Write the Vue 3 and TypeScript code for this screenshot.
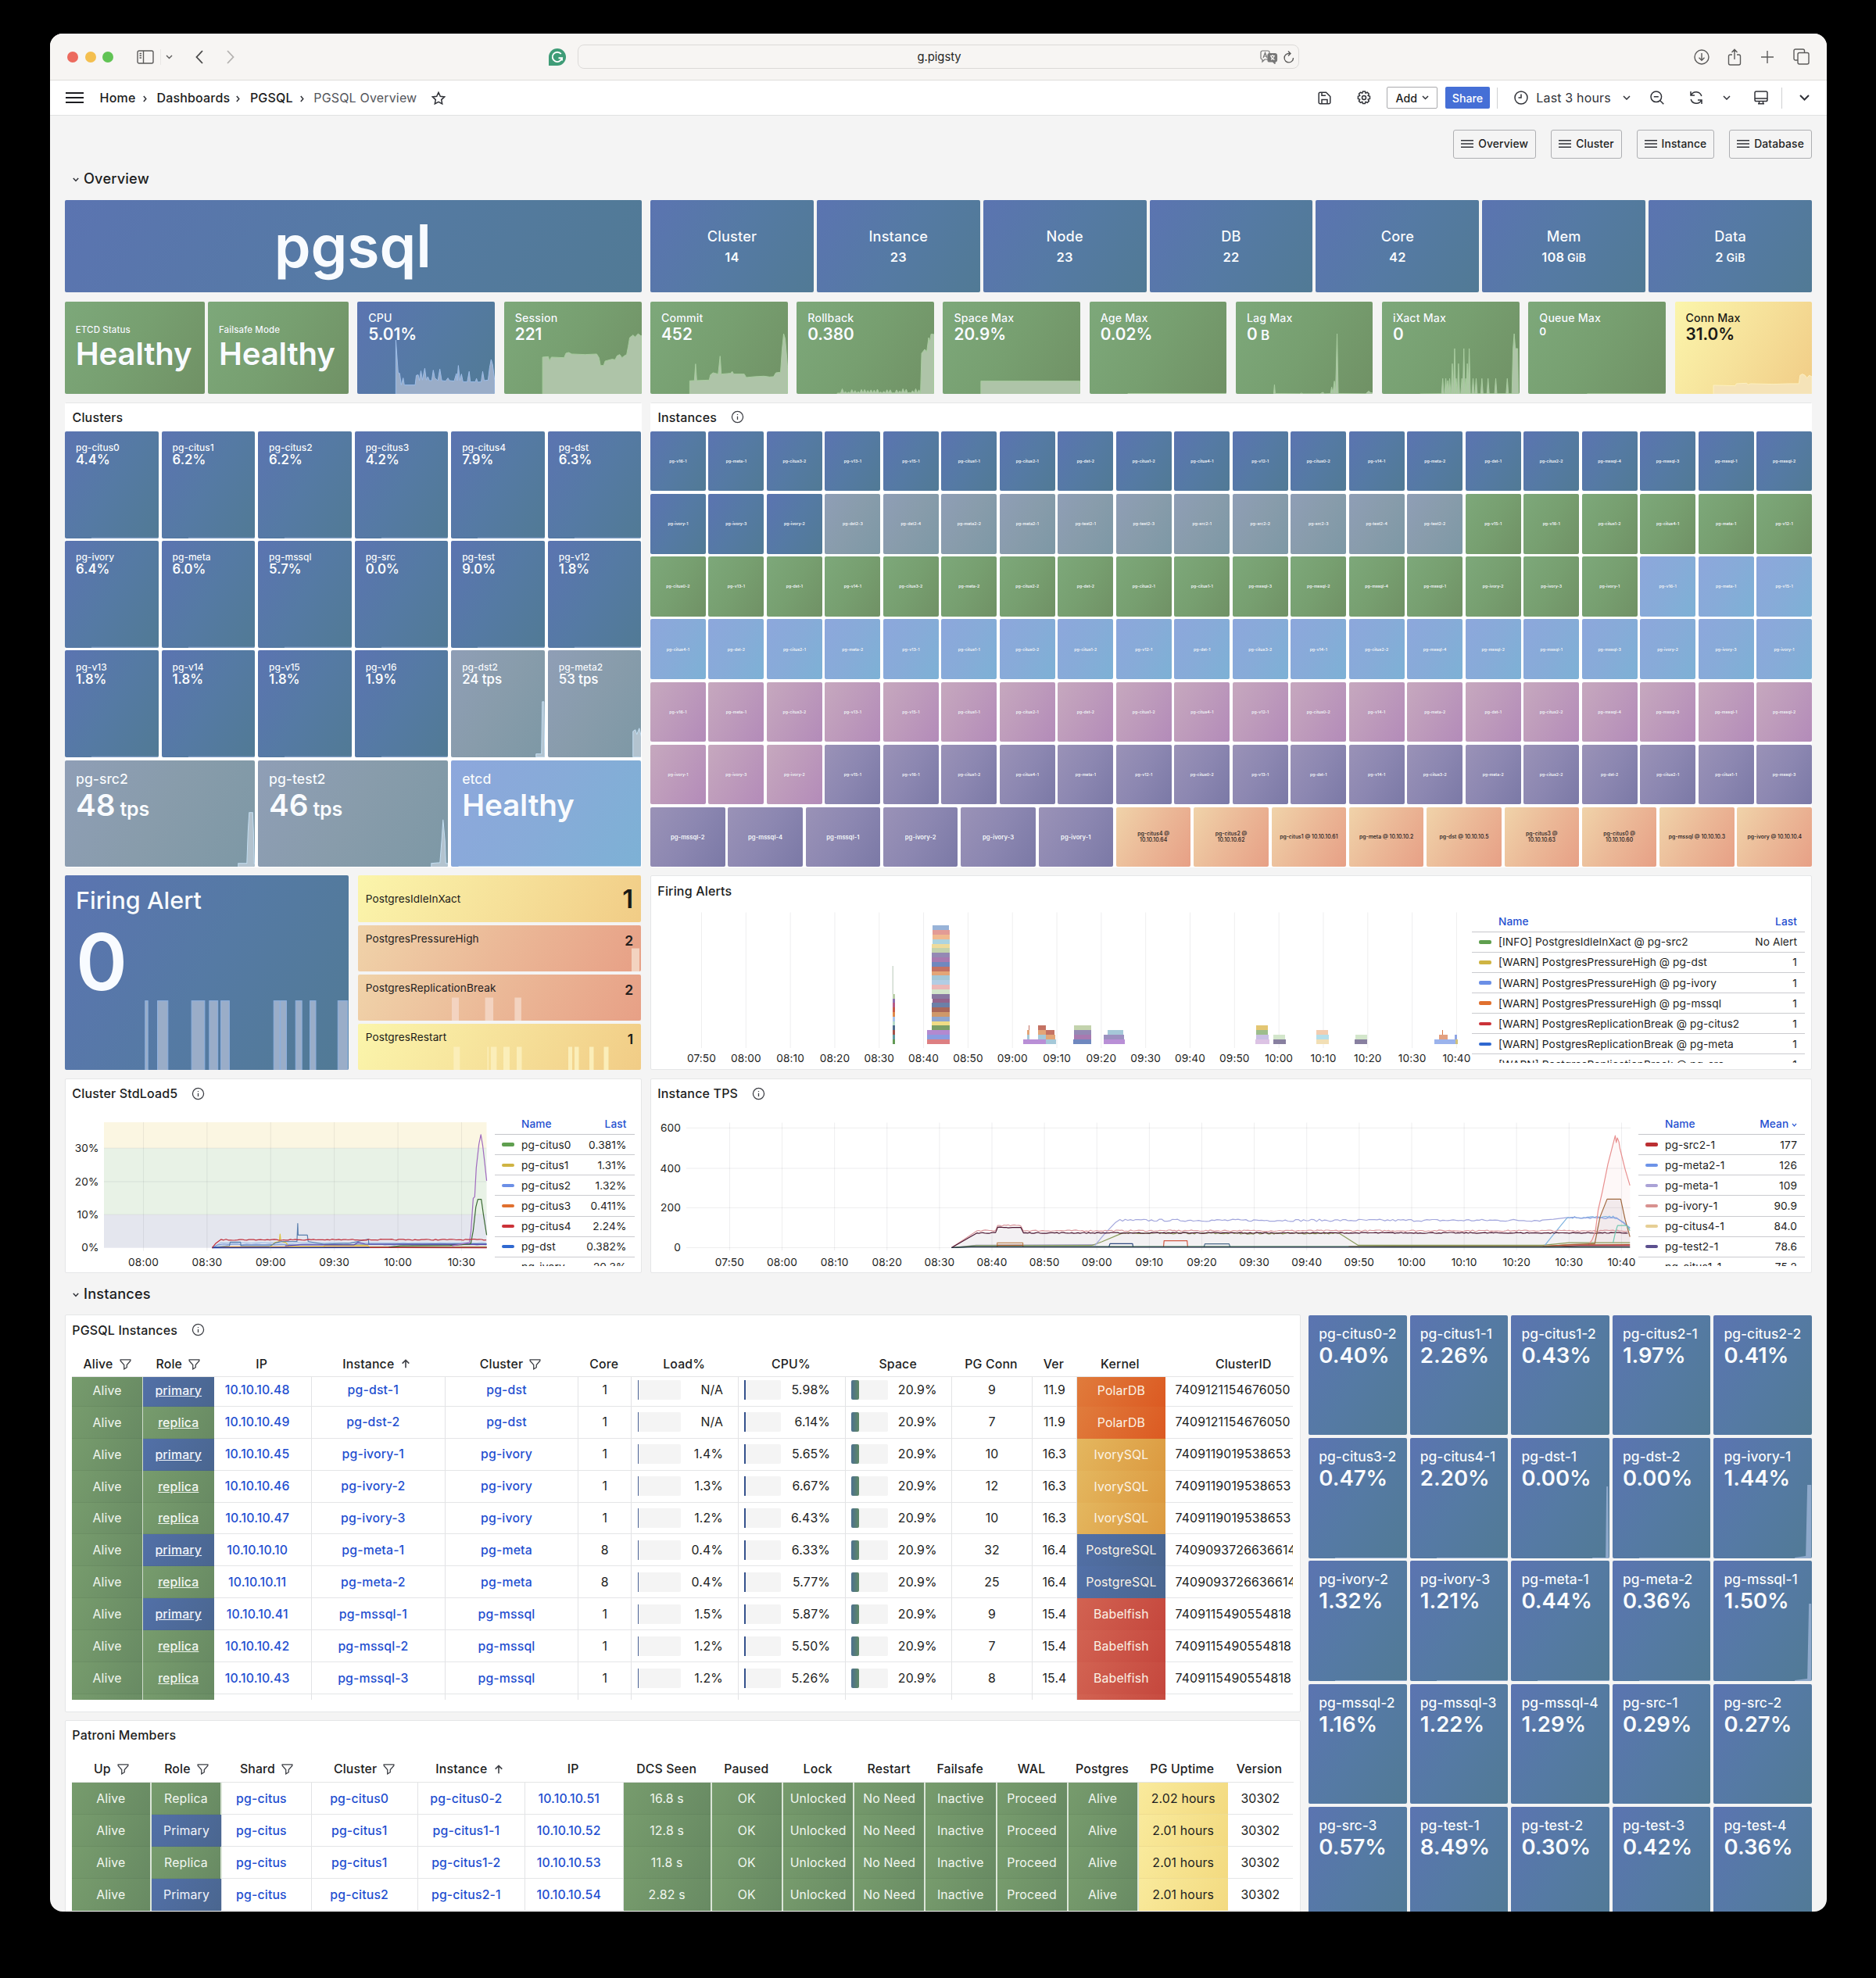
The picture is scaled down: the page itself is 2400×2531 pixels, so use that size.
<script setup lang="ts">
type Tone = 'blue' | 'green' | 'grey' | 'sky' | 'pink' | 'purple' | 'orange' | 'yellow'
interface Stat { title: string; value: string; unit?: string; tone: Tone; small?: boolean; spark?: string; stroke?: string; fill?: string; box?: string }
interface Legend { name: string; value: string; color: string }
interface Col { label: string; w: number; icon?: 'filter' | 'sort' }

const icons: Record<string, string> = {
  filter: 'M3 4h18v2l-6.5 7.5V18l-5 3v-7.500L3 6z',
  sort: 'M12 20V5M5.500 11.500L12 5l6.500 6.500',
  info: 'M12 2a10 10 0 1 0 0 20a10 10 0 1 0 0-20M12 11v6M12 7v1.500',
}

const overview = [
  { t: 'Cluster', v: '14', u: '' }, { t: 'Instance', v: '23', u: '' }, { t: 'Node', v: '23', u: '' },
  { t: 'DB', v: '22', u: '' }, { t: 'Core', v: '42', u: '' }, { t: 'Mem', v: '108', u: ' GiB' }, { t: 'Data', v: '2', u: ' GiB' },
]
const links = [{ n: 'Overview', w: 106.5 }, { n: 'Cluster', w: 90.5 }, { n: 'Instance', w: 99.5 }, { n: 'Database', w: 106 }]

/* Deterministic noise so that the sparklines look the same on each load */
let seed = 7
function rnd(): number {
  seed = (seed * 16807) % 2147483647
  return seed / 2147483647
}
function spikes(list: number[][], base: number, half = 2): string {
  return list.map(([x, y]) => `${x - half},${base} ${x},${y} ${x + half},${base}`).join(' ')
}
const rollNoise = Array.from({ length: 52 }, (_, i) => `${504 + i * 4.1},${i % 2 ? 398 - rnd() * 18 : 398}`).join(' ')

const leftStats: Stat[] = [
  {
    title: 'CPU', value: '5.01%', tone: 'blue', box: '789 47 356 355', fill: '#9aadc8', stroke: '#9dbde8',
    spark: '889,402 889,195 895,320 899,322 903,367 908,340 911,367 939,367 942,330 947,328 950,350 954,313 958,348 964,303 968,348 972,335 976,350 982,350 986,310 990,340 994,345 998,350 1003,306 1008,350 1018,352 1024,340 1028,350 1040,352 1046,323 1048,350 1051,292 1055,350 1059,325 1063,355 1074,355 1079,315 1082,355 1095,355 1098,342 1101,356 1110,355 1114,315 1118,350 1128,348 1132,300 1136,269 1140,290 1145,350 1145,402',
  },
  {
    title: 'Session', value: '221', tone: 'green', box: '1169 47 358 355',
    spark: '1269,402 1269,260 1284,258 1287,275 1292,260 1325,262 1330,245 1337,242 1345,248 1380,250 1410,248 1416,262 1420,292 1428,292 1432,275 1450,268 1458,270 1463,255 1470,250 1476,262 1482,255 1488,250 1492,220 1496,185 1505,175 1510,183 1518,170 1524,177 1527,178 1527,402',
  },
]
const rightStats: Stat[] = [
  {
    title: 'Commit', value: '452', tone: 'green', box: '24 47 352 355',
    spark: '125,402 125,351 137,350 140,286 143,350 175,348 178,328 185,320 198,325 203,256 206,325 230,322 234,315 238,325 265,325 270,338 290,335 315,333 330,336 340,335 346,320 358,318 362,230 366,170 370,190 374,260 376,300 376,402',
  },
  {
    title: 'Rollback', value: '0.380', tone: 'green', box: '399 47 352 355',
    spark: `503,402 ${rollNoise} 717,400 720,245 728,230 733,240 738,185 741,200 744,172 751,172 751,402`,
  },
  { title: 'Space Max', value: '20.9%', tone: 'green', box: '777 47 352 355', spark: '875,402 875,352 1129,352 1129,402' },
  { title: 'Age Max', value: '0.02%', tone: 'green', box: '1152 47 352 355', spark: '1250,402 1250,400 1504,400 1504,402' },
  {
    title: 'Lag Max', value: '0', unit: ' B', tone: 'green', box: '0 47 355 355',
    spark: '98,402 100,366 102,400 165,401 170,398 174,401 218,401 225,395 230,401 245,400 248,375 251,400 255,352 258,398 262,170 265,400 336,401 344,390 348,396 355,398 355,402',
  },
  {
    title: 'iXact Max', value: '0', tone: 'green', box: '381 47 357 355',
    spark: '480,402 ' + spikes([[539, 342], [547, 342], [552, 350], [557, 342], [564, 285], [570, 227], [574, 342], [580, 285], [589, 342], [594, 227], [599, 342], [603, 285], [608, 227], [618, 342], [626, 342], [641, 342], [657, 342], [677, 342], [707, 342]], 401, 3) + ' 719,401 722,227 725,170 728,227 734,227 736,401',
  },
  { title: 'Queue Max', value: '0', tone: 'green', small: true, box: '762 47 356 355', spark: '915,402 915,401 1118,401 1118,402' },
  {
    title: 'Conn Max', value: '31.0%', tone: 'yellow', box: '1143 47 358 355', fill: '#f5e3b8', stroke: '#fdf0bf',
    spark: '1243,402 1243,368 1300,370 1303,362 1330,360 1333,366 1340,362 1400,364 1440,362 1466,362 1469,330 1475,325 1482,330 1487,340 1493,330 1500,335 1500,402',
  },
]

interface ClusterTile { n: string; v: string; tone: Tone; spark?: string }
const base = '34,137 34,136 120,136 120,137'
const cl = (n: string, v: string, tone: Tone = 'blue', spark: string = base): ClusterTile => ({ n, v, tone, spark })
const clusters: ClusterTile[] = [
  cl('pg-citus0', '4.4%'), cl('pg-citus1', '6.2%'), cl('pg-citus2', '6.2%'), cl('pg-citus3', '4.2%'), cl('pg-citus4', '7.9%'), cl('pg-dst', '6.3%'),
  cl('pg-ivory', '6.4%'), cl('pg-meta', '6.0%'), cl('pg-mssql', '5.7%'), cl('pg-src', '0.0%'), cl('pg-test', '9.0%'), cl('pg-v12', '1.8%'),
  cl('pg-v13', '1.8%'), cl('pg-v14', '1.8%'), cl('pg-v15', '1.8%'), cl('pg-v16', '1.9%'),
  cl('pg-dst2', '24 tps', 'grey', '109,137 109,133 116,133 117,66 119,66 120,133 120,137'),
  cl('pg-meta2', '53 tps', 'grey', '109,137 109,104 112,102 114,108 117,100 120,112 120,137'),
]
const bigClusters = [
  { n: 'pg-src2', v: '48', u: ' tps', tone: 'grey', spark: '222,137 222,132 233,132 234.500,91 236,67 240.500,67 241.500,91 242.500,132 243.500,132 243.500,137' },
  { n: 'pg-test2', v: '46', u: ' tps', tone: 'grey', spark: '222,137 222,132 233,131 235.500,100 237,76 239.500,104 240.500,132 243.500,132 243.500,137' },
  { n: 'etcd', v: 'Healthy', u: '', tone: 'sky', spark: '10,137 10,136 243.500,136 243.500,137' },
]

const setA = 'v16-1 meta-1 citus3-2 v13-1 v15-1 citus1-1 citus2-1 dst-2 citus1-2 citus4-1 v12-1 citus0-2 v14-1 meta-2 dst-1 citus2-2 mssql-4 mssql-3 mssql-1 mssql-2 ivory-1 ivory-3 ivory-2'
const setB = 'v15-1 v16-1 citus1-2 citus4-1 meta-1 v12-1 citus0-2 v13-1 dst-1 v14-1 citus3-2 meta-2 citus2-2 dst-2 citus2-1 citus1-1 mssql-3 mssql-2 mssql-4 mssql-1 ivory-2 ivory-3 ivory-1'
const setC = 'v16-1 meta-1 v15-1 citus4-1 dst-2 citus2-1 meta-2 v13-1 citus1-1 citus0-2 citus1-2 v12-1 dst-1 citus3-2 v14-1 citus2-2 mssql-4 mssql-2 mssql-1 mssql-3 ivory-2 ivory-3 ivory-1'
const setG = 'dst2-3 dst2-4 meta2-2 meta2-1 test2-1 test2-3 src2-1 src2-2 src2-3 test2-4 test2-2'
const setP = 'v15-1 v16-1 citus1-2 citus4-1 meta-1 v12-1 citus0-2 v13-1 dst-1 v14-1 citus3-2 meta-2 citus2-2 dst-2 citus2-1 citus1-1 mssql-3'
const paint = (s: string, tone: Tone) => s.split(' ').map((n) => ({ n: 'pg-' + n, tone }))
const instances = [...paint(setA, 'blue'), ...paint(setG, 'grey'), ...paint(setB, 'green'), ...paint(setC, 'sky'), ...paint(setA, 'pink'), ...paint(setP, 'purple')]
const instancesLast = [
  ...paint('mssql-2 mssql-4 mssql-1 ivory-2 ivory-3 ivory-1', 'purple'),
  ...['pg-citus4 @\n10.10.10.64', 'pg-citus2 @\n10.10.10.62', 'pg-citus1 @ 10.10.10.61', 'pg-meta @ 10.10.10.2', 'pg-dst @ 10.10.10.5', 'pg-citus3 @\n10.10.10.63', 'pg-citus0 @\n10.10.10.60', 'pg-mssql @ 10.10.10.3', 'pg-ivory @ 10.10.10.4'].map((n) => ({ n, tone: 'orange' as Tone })),
]

/* Alert summary */
const firingBars = [[102.700, 3.400], [118.400, 13.300], [162, 16.700], [184.700, 10.800], [199.400, 10.800], [267, 7.900], [275.500, 7.700], [295, 7.900], [313.300, 7.400], [349, 12.500]]
const alertRows = [
  { n: 'PostgresIdleInXact', v: '1', tone: 'yellow', big: true, bars: [] as number[][] },
  { n: 'PostgresPressureHigh', v: '2', tone: 'orange', big: false, bars: [[350, 10]] },
  { n: 'PostgresReplicationBreak', v: '2', tone: 'orange', big: false, bars: [[120, 9], [162.600, 10.500], [200.400, 8.500]] },
  { n: 'PostgresRestart', v: '1', tone: 'yellow', big: false, bars: [[122.300, 8], [165.500, 1.500], [170, 7.400], [186, 8], [203, 6.500], [269, 5], [277, 5.500], [296, 5.500], [314.500, 6]] },
]

/* Firing alerts timeline */
const R = (x0: number, x1: number, level: number, color: string, right = false) => {
  const k = right ? 2.01 : 2.063
  const o = right ? 1560 : 820
  return { x: o + x0 / k, w: (x1 - x0) / k, y: 1335.8 - level * 5.83, h: 5.83, color }
}
const tower = ['#dd7f82', '#8b9ce0', '#b389d0', '#7b9f66', '#f0dc85', '#8fa5cf', '#cf9869', '#aa6759', '#6b80a8', '#92648c', '#8878a0', '#d3e6cb', '#ecb8b6', '#b2cde4', '#a5c8d8', '#e3a577', '#c47263', '#6f88bf', '#a87ab0', '#9489b4', '#c3d3ad', '#eedb9b', '#acd4e0', '#f0b98f', '#e39b95', '#98b3d8']
const sliver = ['#629a55', '#5f98a0', '#a3524a', '#4f6a8c', '#b5dbc9', '#a9c3ea', '#e08a4a', '#c95a4a', '#b65a86', '#8f6fb0', '#b9cfa8']
const blocks = [
  ...tower.map((c, i) => R(i < 3 ? 756 : i < 9 ? 767 : 770, i === 25 ? 812 : 815, i + 1, c)),
  ...tower.slice(10, 22).map((c, i) => R(767, 770, i + 11, c)),
  ...sliver.map((c, i) => R(664, 671.500, i + 1, c)),
  R(1008, 1068, 1, '#b98fd6'), R(1068, 1096, 1, '#a5c8d8'), R(1020, 1026, 2, '#a5c8d8'), R(1020, 1026, 3, '#e3a577'), R(1023, 1025, 4, '#c47263'),
  R(1047, 1068, 2, '#a5c8d8'), R(1047, 1068, 3, '#e3a577'), R(1049, 1068, 4, '#c47263'), R(1068, 1093, 2, '#e3a577'), R(1068, 1091, 3, '#c47263'),
  R(1141, 1188, 1, '#6f88bf'), R(1143, 1188, 2, '#a87ab0'), R(1143, 1188, 3, '#9489b4'), R(1143, 1188, 4, '#c3d3ad'),
  R(1221, 1276, 1, '#b98fd6'), R(1221, 1274, 2, '#9c90c0'), R(1232, 1273, 3, '#a5c8d8'),
  R(92, 128, 1, '#dcc3e4', true), R(94, 127, 2, '#c9bfe3', true), R(94, 125, 3, '#9dbd8c', true), R(94, 125, 4, '#e3c673', true),
  R(139, 170, 1, '#8880a0', true), R(139, 169, 2, '#d3e6cb', true),
  R(249, 281, 1, '#f2dfb5', true), R(249, 282, 2, '#b5dfea', true), R(250, 279, 3, '#f2cdb0', true),
  R(348, 379, 1, '#8880a0', true), R(349, 379, 2, '#d3e6cb', true),
  R(552, 607, 1, '#9bb3ec', true), R(564, 587, 2, '#e3a080', true), R(573, 575, 3, '#d97a4a', true), R(606, 611, 2, '#8fa5e3', true), R(607, 614, 1, '#cfc07a', true),
]
const clock = (m: number) => {
  const t = 470 + m
  return String(Math.floor(t / 60)).padStart(2, '0') + ':' + String(t % 60).padStart(2, '0')
}
const alertTicks = Array.from({ length: 18 }, (_, i) => ({ x: 897.5 + i * 56.82, label: clock(i * 10) }))
const tpsTicks = Array.from({ length: 18 }, (_, i) => ({ x: 933.4 + i * 67.12, label: clock(i * 10) }))
const loadTicks = Array.from({ length: 6 }, (_, i) => ({ x: 183.5 + i * 81.4, label: clock(10 + i * 30) }))

const alertLegend: Legend[] = [
  { name: '[INFO] PostgresIdleInXact @ pg-src2', value: 'No Alert', color: '#5f9f4f' },
  { name: '[WARN] PostgresPressureHigh @ pg-dst', value: '1', color: '#cfb443' },
  { name: '[WARN] PostgresPressureHigh @ pg-ivory', value: '1', color: '#6b8fe6' },
  { name: '[WARN] PostgresPressureHigh @ pg-mssql', value: '1', color: '#e0702f' },
  { name: '[WARN] PostgresReplicationBreak @ pg-citus2', value: '1', color: '#cb3238' },
  { name: '[WARN] PostgresReplicationBreak @ pg-meta', value: '1', color: '#2f68d0' },
  { name: '[WARN] PostgresReplicationBreak @ pg-src', value: '1', color: '#fff' },
]
const loadLegend: Legend[] = [
  { name: 'pg-citus0', value: '0.381%', color: '#5f9f4f' }, { name: 'pg-citus1', value: '1.31%', color: '#cfb443' },
  { name: 'pg-citus2', value: '1.32%', color: '#6b8fe6' }, { name: 'pg-citus3', value: '0.411%', color: '#e0702f' },
  { name: 'pg-citus4', value: '2.24%', color: '#cb3238' }, { name: 'pg-dst', value: '0.382%', color: '#2f68d0' },
  { name: 'pg-ivory', value: '20.3%', color: '#fff' },
]
const tpsLegend: Legend[] = [
  { name: 'pg-src2-1', value: '177', color: '#bb2f33' }, { name: 'pg-meta2-1', value: '126', color: '#6d93e8' },
  { name: 'pg-meta-1', value: '109', color: '#aaa2d6' }, { name: 'pg-ivory-1', value: '90.9', color: '#d8918f' },
  { name: 'pg-citus4-1', value: '84.0', color: '#e6cf95' }, { name: 'pg-test2-1', value: '78.6', color: '#5b4f8e' },
  { name: 'pg-citus1-1', value: '75.2', color: '#fff' },
]

/* Cluster load series, in plot space */
const lp = (pts: number[][]) => pts.map(([x, y]) => `${(70 + x / 2.036).toFixed(1)},${(960 + y / 2.306).toFixed(1)}`).join(' ')
function flat(x0: number, x1: number, y: number, amp: number, step: number): number[][] {
  const out: number[][] = []
  for (let x = x0; x <= x1; x += step) out.push([x, y + (rnd() - 0.5) * amp])
  return out
}
const loadSeries = [
  { c: '#a9c4e8', p: lp([[410, 1466], [432, 1451], ...flat(440, 1125, 1451, 2, 12)]) },
  { c: '#7f9bd6', p: lp([[410, 1466], [425, 1457], ...flat(440, 1125, 1456, 2, 12)]) },
  { c: '#c98a3f', p: lp([[410, 1466], [440, 1463], [1125, 1463]]) },
  { c: '#e0c23f', p: lp([[558, 1466], [574, 1450], [585, 1447], [587, 1425], [589, 1447], [602, 1450], [610, 1462], [700, 1462], [704, 1459], [815, 1458], [820, 1464], [1125, 1464]]) },
  { c: '#5a7fae', p: lp([[410, 1464], [455, 1460], [457, 1449], [484, 1449], [485, 1460], [562, 1460], [574, 1452], [590, 1447], [631, 1447], [633, 1394], [634, 1428], [658, 1428], [660, 1447], [700, 1455], [770, 1452], [790, 1447], [817, 1440], [818, 1455], [1125, 1454]]) },
  { c: '#5a4ab0', p: lp([[600, 1460], [640, 1457], [780, 1457], [790, 1450], [810, 1455], [1125, 1456]]) },
  { c: '#1c2f9a', p: lp([[410, 1466], [1125, 1465]]) },
  { c: '#3d6b35', p: lp([[870, 1464], [900, 1460], [1030, 1459], [1080, 1455], [1084, 1452], [1090, 1415], [1097, 1345], [1102, 1323], [1111, 1323], [1117, 1370], [1125, 1428]]) },
  { c: '#a06bbf', p: lp([[1035, 1460], [1080, 1450], [1084, 1420], [1090, 1320], [1094, 1315], [1098, 1230], [1105, 1160], [1110, 1132], [1115, 1165], [1120, 1215], [1125, 1268]]) },
  { c: '#c0303c', p: lp([[410, 1466], [420, 1452], [433, 1441], ...flat(440, 1125, 1442, 3, 6)]) },
  { c: '#a8203a', p: lp([[820, 1465], [1125, 1466]]) },
]

/* TPS series: minutes after 07:50 against transactions per second */
const tp = (pts: number[][]) => pts.map(([m, v]) => `${(933.4 + m * 6.712).toFixed(1)},${(1595.5 - v * 0.2555).toFixed(1)}`).join(' ')
const backbone = (v: number, b: number, amp: number) => [[42.300, 0], [47.200, v], ...flat(47.500, 50.900, v, amp, 0.4), ...flat(51.100, 55.800, b, amp, 0.4), ...flat(56, 171.600, v, amp, 0.4)]
const tpsFill = tp([[42.300, 0], [47.200, 75], [51, 75], [51, 104], [55.900, 104], [55.900, 75], [164.900, 76], [166, 153], [167.250, 243], [169.850, 243], [170.700, 140], [171.600, 75], [171.600, 0]])
const pinkPts = [[163.700, 15], [164.400, 40], [165, 80], [165.550, 190], [166.300, 275], [167, 365], [167.400, 418], [168.100, 490], [168.800, 561], [169, 527], [169.200, 550], [169.500, 530], [169.700, 497], [170.700, 392], [171.600, 312]]
const tpsSeries = [
  { c: '#8f88b5', p: tp([[42.300, 0], [47, 12], [69.500, 14]]) },
  { c: '#8a9a5a', p: tp([[42.300, 0], [47, 10], [69, 11], [71, 30], [74.400, 68], ...flat(75, 115.900, 72, 8, 0.4), [116, 75], [119.800, 12], [155, 12], [160, 25], [171.600, 25]]) },
  { c: '#a3a7dd', p: tp([[69.600, 10], [71.500, 70], [73.500, 125], ...flat(74.400, 155, 137, 11, 0.5), [157, 142], [160, 152]]) },
  { c: '#7fb3e0', p: tp([[155.400, 12], [157, 65], [159.600, 148], ...flat(160, 169.400, 152, 12, 0.35), [170.500, 125], [171.600, 95]]) },
  { c: '#8fa0e0', p: tp([...flat(160, 169.400, 149, 8, 0.5), [171.600, 100]]) },
  { c: '#d9969b', p: tp(backbone(85, 111, 7)) },
  { c: '#4a1530', p: tp(backbone(74, 101, 5)) },
  { c: '#e88f8f', p: tp(pinkPts) },
  { c: '#a0683f', p: tp([[155, 5], [160, 15], [164.900, 20], [165.900, 153], [167.250, 243], [169.850, 243], [170.700, 140], [171.600, 54]]) },
  { c: '#6fc7b0', p: tp([[168.400, 25], [168.800, 74], [169.250, 111], [171, 111], [171.600, 85]]) },
  { c: '#c08a5a', p: tp([[51, 4], [51, 24], [55.900, 24], [55.900, 4]]) },
  { c: '#a85a2a', p: tp([[51, 4], [51, 12], [55.900, 12], [55.900, 4]]) },
  { c: '#2f4a80', p: tp([[72.300, 4], [72.500, 20], [76.800, 20], [76.900, 4]]) },
  { c: '#d05a45', p: tp([[82.700, 4], [82.800, 35], [87.200, 35], [87.300, 4]]) },
  { c: '#4a6a8a', p: tp([[90.400, 4], [90.600, 19], [95.200, 19], [95.400, 4]]) },
  { c: '#b8542a', p: tp([[118, 6], [155, 8], [160, 14], [171.600, 15]]) },
  { c: '#a02040', p: tp([[156, 4], [162, 10], [171.600, 10]]) },
  { c: '#2f6b45', p: tp([[42.300, 0], [46, 5], [120, 6], [171.600, 4]]) },
  { c: '#26314a', p: tp([[42.300, 0], [46, 3], [171.600, 2]]) },
]

/* PGSQL instances table */
const cols1: Col[] = [
  { label: 'Alive', w: 91, icon: 'filter' }, { label: 'Role', w: 90.500, icon: 'filter' }, { label: 'IP', w: 125.400 }, { label: 'Instance', w: 170.900, icon: 'sort' },
  { label: 'Cluster', w: 170.400, icon: 'filter' }, { label: 'Core', w: 68.300 }, { label: 'Load%', w: 136.400 }, { label: 'CPU%', w: 137 }, { label: 'Space', w: 136.600 },
  { label: 'PG Conn', w: 102.200 }, { label: 'Ver', w: 57.700 }, { label: 'Kernel', w: 112.200 }, { label: 'ClusterID', w: 163.500 },
]
const grid1 = cols1.map((c) => c.w + 'px').join(' ')
const rows1 = [
  ['primary', '10.10.10.48', 'pg-dst-1', 'pg-dst', '1', 'N/A', '5.98%', '9', '11.9', 'PolarDB', '7409121154676050'],
  ['replica', '10.10.10.49', 'pg-dst-2', 'pg-dst', '1', 'N/A', '6.14%', '7', '11.9', 'PolarDB', '7409121154676050'],
  ['primary', '10.10.10.45', 'pg-ivory-1', 'pg-ivory', '1', '1.4%', '5.65%', '10', '16.3', 'IvorySQL', '7409119019538653'],
  ['replica', '10.10.10.46', 'pg-ivory-2', 'pg-ivory', '1', '1.3%', '6.67%', '12', '16.3', 'IvorySQL', '7409119019538653'],
  ['replica', '10.10.10.47', 'pg-ivory-3', 'pg-ivory', '1', '1.2%', '6.43%', '10', '16.3', 'IvorySQL', '7409119019538653'],
  ['primary', '10.10.10.10', 'pg-meta-1', 'pg-meta', '8', '0.4%', '6.33%', '32', '16.4', 'PostgreSQL', '7409093726636614'],
  ['replica', '10.10.10.11', 'pg-meta-2', 'pg-meta', '8', '0.4%', '5.77%', '25', '16.4', 'PostgreSQL', '7409093726636614'],
  ['primary', '10.10.10.41', 'pg-mssql-1', 'pg-mssql', '1', '1.5%', '5.87%', '9', '15.4', 'Babelfish', '7409115490554818'],
  ['replica', '10.10.10.42', 'pg-mssql-2', 'pg-mssql', '1', '1.2%', '5.50%', '7', '15.4', 'Babelfish', '7409115490554818'],
  ['replica', '10.10.10.43', 'pg-mssql-3', 'pg-mssql', '1', '1.2%', '5.26%', '8', '15.4', 'Babelfish', '7409115490554818'],
  ['replica', '', '', '', '', '', '', '', '', 'Babelfish', ''],
]

/* Patroni table */
const cols2: Col[] = [
  { label: 'Up', w: 101.600, icon: 'filter' }, { label: 'Role', w: 90.700, icon: 'filter' }, { label: 'Shard', w: 114.300, icon: 'filter' }, { label: 'Cluster', w: 136.200, icon: 'filter' },
  { label: 'Instance', w: 137.200, icon: 'sort' }, { label: 'IP', w: 125.600 }, { label: 'DCS Seen', w: 113.200 }, { label: 'Paused', w: 91.100 }, { label: 'Lock', w: 91.600 },
  { label: 'Restart', w: 90.500 }, { label: 'Failsafe', w: 91.600 }, { label: 'WAL', w: 91 }, { label: 'Postgres', w: 90 }, { label: 'PG Uptime', w: 114.400 }, { label: 'Version', w: 83 },
]
const grid2 = cols2.map((c) => c.w + 'px').join(' ')
const rows2 = [
  ['Replica', 'pg-citus0', 'pg-citus0-2', '10.10.10.51', '16.8 s', '2.02 hours'],
  ['Primary', 'pg-citus1', 'pg-citus1-1', '10.10.10.52', '12.8 s', '2.01 hours'],
  ['Replica', 'pg-citus1', 'pg-citus1-2', '10.10.10.53', '11.8 s', '2.01 hours'],
  ['Primary', 'pg-citus2', 'pg-citus2-1', '10.10.10.54', '2.82 s', '2.01 hours'],
]
const states = ['OK', 'Unlocked', 'No Need', 'Inactive', 'Proceed', 'Alive']

const side = [
  ['pg-citus0-2', '0.40%'], ['pg-citus1-1', '2.26%'], ['pg-citus1-2', '0.43%'], ['pg-citus2-1', '1.97%'], ['pg-citus2-2', '0.41%'],
  ['pg-citus3-2', '0.47%'], ['pg-citus4-1', '2.20%'], ['pg-dst-1', '0.00%'], ['pg-dst-2', '0.00%'], ['pg-ivory-1', '1.44%'],
  ['pg-ivory-2', '1.32%'], ['pg-ivory-3', '1.21%'], ['pg-meta-1', '0.44%'], ['pg-meta-2', '0.36%'], ['pg-mssql-1', '1.50%'],
  ['pg-mssql-2', '1.16%'], ['pg-mssql-3', '1.22%'], ['pg-mssql-4', '1.29%'], ['pg-src-1', '0.29%'], ['pg-src-2', '0.27%'],
  ['pg-src-3', '0.57%'], ['pg-test-1', '8.49%'], ['pg-test-2', '0.30%'], ['pg-test-3', '0.42%'], ['pg-test-4', '0.36%'],
]
const sideSpark = (i: number): string => {
  if (i === 7) return '104,154 104,153 121,153 122,62 124,62 125,153 125,154'
  if (i === 9) return '104,154 104,153 118,151 120,60 125,60 125,154'
  if (i === 14) return '104,154 104,153 120,151 122,55 125,55 125,154'
  return '34,154 34,153 126,153 126,154'
}
</script>

<template>
  <div class="desk">
    <div class="window">
      <header class="chrome">
        <div class="lights"><i class="r" /><i class="y" /><i class="g" /></div>
        <svg class="cs-side" width="22" height="18" viewBox="0 0 22 18"><rect x="1" y="1" width="20" height="16" rx="2" /><path d="M8.500 1v16M3.500 4.500h2.500M3.500 7.300h2.500M3.500 10h2.500" /></svg>
        <span class="cs-sep" />
        <svg class="cs-drop" width="9" height="6" viewBox="0 0 9 6"><path d="M1 1l3.500 3.500L8 1" /></svg>
        <svg class="cs-back" width="10" height="18" viewBox="0 0 10 18"><path d="M9 1L1.500 9L9 17" /></svg>
        <svg class="cs-fwd" width="10" height="18" viewBox="0 0 10 18"><path d="M1 1l7.500 8L1 17" /></svg>
        <svg class="cs-gram" width="22" height="22" viewBox="0 0 22 22"><path d="M11 0a11 11 0 1 1 0 22H0V11A11 11 0 0 1 11 0z" fill="#3f9c77" /><path d="M15.800 7A6.200 6.200 0 1 0 17 12.300h-4.500M17 12v3.500" fill="none" stroke="#fff" stroke-width="1.900" /></svg>
        <div class="url">
          <span>g.pigsty</span>
          <svg class="u-tr" width="23" height="18" viewBox="0 0 23 18"><path d="M3 1h7a2 2 0 0 1 2 2v7a2 2 0 0 1-2 2H6l-3 3v-3a2 2 0 0 1-2-2V3a2 2 0 0 1 2-2zM4 10l2.500-6.500L9 10M5 8h3" /><path d="M12 4.500h7a2.500 2.500 0 0 1 2.500 2.500v5.500A2.500 2.500 0 0 1 19 15v2.500L16.500 15H12a2 2 0 0 1-2-2V6.500a2 2 0 0 1 2-2z" fill="#777" /><path d="M13 7.500h6M16 6v1.500M14 12.500c2.500-1 3.500-2.500 4-5M14 8c.5 2 2 3.500 4.500 4.500" stroke="#f7f5f3" /></svg>
          <svg class="u-re" width="14" height="17" viewBox="0 0 14 17"><path d="M12.500 10A5.700 5.700 0 1 1 7 4.500h1.500M6 1.500l3 3l-3 3" /></svg>
        </div>
        <div class="cs-right">
          <svg width="20" height="20" viewBox="0 0 20 20"><circle cx="10" cy="10" r="9" /><path d="M10 5v9M6.500 10.800L10 14.200l3.500-3.400" /></svg>
          <svg width="18" height="22" viewBox="0 0 18 22"><path d="M6 8H3.500A2 2 0 0 0 1.500 10v9a2 2 0 0 0 2 2h11a2 2 0 0 0 2-2v-9a2 2 0 0 0-2-2H12M9 14V1.500M5.500 5L9 1.300L12.500 5" /></svg>
          <svg width="16" height="16" viewBox="0 0 16 16"><path d="M8 0v16M0 8h16" /></svg>
          <svg width="21" height="21" viewBox="0 0 21 21"><rect x="6" y="5.500" width="14" height="14.500" rx="2" /><path d="M6 15H3a2 2 0 0 1-2-2V3a2 2 0 0 1 2-2h9.500a2 2 0 0 1 2 2v2.500" /></svg>
        </div>
      </header>

      <nav class="nav">
        <svg class="n-menu" width="23" height="14" viewBox="0 0 23 14"><path d="M0 1h23M0 7h23M0 13h23" /></svg>
        <span class="crumb c1">Home</span><svg class="sep" width="5" height="9" viewBox="0 0 5 9"><path d="M.8 1l3 3.500l-3 3.500" /></svg>
        <span class="crumb c2">Dashboards</span><svg class="sep" width="5" height="9" viewBox="0 0 5 9"><path d="M.8 1l3 3.500l-3 3.500" /></svg>
        <span class="crumb c3">PGSQL</span><svg class="sep" width="5" height="9" viewBox="0 0 5 9"><path d="M.8 1l3 3.500l-3 3.500" /></svg>
        <span class="crumb c4">PGSQL Overview</span>
        <svg class="n-star" width="18" height="17" viewBox="0 0 18 17"><path d="M9 1.200l2.300 5l5.400.7l-4 3.700l1 5.300L9 13.300L4.300 15.900l1-5.300l-4-3.700l5.400-.7z" /></svg>
        <div class="tools">
          <svg class="t-save" width="17" height="17" viewBox="0 0 17 17"><path d="M1.200 3A1.800 1.800 0 0 1 3 1.200h7.500l5.300 5.300V14a1.800 1.800 0 0 1-1.800 1.800H3A1.800 1.800 0 0 1 1.200 14zM5 1.200v4h5M5 15.500V10.500h7v5" /></svg>
          <svg class="t-gear" width="18" height="18" viewBox="0 0 18 18"><circle cx="9" cy="9" r="2.500" /><path d="M7.500 1h3l.6 2.200l2.200-1.100l2 2l-1.100 2.200l2.300.9v3.200l-2.300.8l1.100 2.200l-2 2l-2.200-1.100l-.8 2.300H7.500l-.8-2.300l-2.200 1.100l-2-2l1.100-2.200L1.400 10.500V7.300l2.200-.9l-1.100-2.200l2-2l2.200 1.100z" /></svg>
          <button class="add">Add <svg width="9" height="6" viewBox="0 0 9 6"><path d="M1 1l3.500 3.500L8 1" /></svg></button>
          <button class="share">Share</button>
          <span class="vbar v1" />
          <svg class="t-clock" width="18" height="18" viewBox="0 0 18 18"><circle cx="9" cy="9" r="8" /><path d="M9 4.500V9H5.500" /></svg>
          <span class="range">Last 3 hours</span>
          <svg class="t-d1" width="10" height="6" viewBox="0 0 10 6"><path d="M1 1l4 4l4-4" /></svg>
          <svg class="t-zoom" width="18" height="18" viewBox="0 0 18 18"><circle cx="7.800" cy="7.800" r="6.800" /><path d="M4.800 7.800h6M12.800 12.800l4.500 4.500" /></svg>
          <svg class="t-ref" width="18" height="18" viewBox="0 0 18 18"><path d="M2 1v5h5M2.300 6A7.200 7.200 0 0 1 15.800 7M16 17v-5h-5M15.700 12A7.200 7.200 0 0 1 2.200 11" /></svg>
          <svg class="t-d2" width="10" height="6" viewBox="0 0 10 6"><path d="M1 1l4 4l4-4" /></svg>
          <svg class="t-mon" width="18" height="18" viewBox="0 0 18 18"><rect x="1" y="1" width="16" height="12.500" rx="1.800" /><path d="M1 10h16M6.500 13.500v3M11.500 13.500v3M5 16.800h8" /></svg>
          <span class="vbar v2" />
          <svg class="t-d3" width="13" height="8" viewBox="0 0 13 8"><path d="M1 1l5.500 5.500L12 1" /></svg>
        </div>
      </nav>

      <main class="body">
        <div class="links">
          <a v-for="l in links" :key="l.n" :style="{ width: l.w + 'px' }"><svg width="16" height="10" viewBox="0 0 16 10"><path d="M0 .8h16M0 5h16M0 9.200h16" /></svg>{{ l.n }}</a>
        </div>
        <div class="rowtitle"><svg width="8" height="6" viewBox="0 0 8 6"><path d="M.8 1L4 4.500L7.200 1" /></svg>Overview</div>

        <section class="line h1">
          <div class="left tile blue hero">pgsql</div>
          <div class="right tight">
            <div v-for="o in overview" :key="o.t" class="tile blue ov"><span class="ot">{{ o.t }}</span><span class="ovv">{{ o.v }}<small>{{ o.u }}</small></span></div>
          </div>
        </section>

        <section class="line h2">
          <div class="left panels">
            <div class="double tight">
              <div class="tile green health"><span>ETCD Status</span><b>Healthy</b></div>
              <div class="tile green health"><span>Failsafe Mode</span><b>Healthy</b></div>
            </div>
            <div v-for="s in leftStats" :key="s.title" class="tile stat" :class="s.tone">
              <svg class="spark" :viewBox="s.box" preserveAspectRatio="none"><polygon :points="s.spark" :fill="s.fill || '#aec4a8'" :stroke="s.stroke || '#a8cc9f'" /></svg>
              <span class="st">{{ s.title }}</span><b>{{ s.value }}</b>
            </div>
          </div>
          <div class="right panels">
            <div v-for="s in rightStats" :key="s.title" class="tile stat" :class="[s.tone, { small: s.small }]">
              <svg class="spark" :viewBox="s.box" preserveAspectRatio="none"><polygon :points="s.spark" :fill="s.fill || '#aec4a8'" :stroke="s.stroke || '#a8cc9f'" /></svg>
              <span class="st">{{ s.title }}</span><b>{{ s.value }}<small>{{ s.unit }}</small></b>
            </div>
          </div>
        </section>

        <section class="line h3">
          <div class="left panel">
            <h2>Clusters</h2>
            <div class="cgrid">
              <div v-for="c in clusters" :key="c.n" class="tile ctile" :class="c.tone">
                <svg class="spark" viewBox="0 0 120 137" preserveAspectRatio="none"><polygon :points="c.spark" :fill="c.tone === 'grey' ? '#b3c3cf' : '#8aa6cc'" :stroke="c.tone === 'grey' ? '#c3def2' : 'none'" /></svg>
                <span>{{ c.n }}</span><b>{{ c.v }}</b>
              </div>
            </div>
            <div class="bigc">
              <div v-for="c in bigClusters" :key="c.n" class="tile btile" :class="c.tone">
                <svg class="spark" viewBox="0 0 243.500 137" preserveAspectRatio="none"><polygon :points="c.spark" fill="#b3c3cf" stroke="#c3def2" /></svg>
                <span>{{ c.n }}</span><b>{{ c.v }}<small>{{ c.u }}</small></b>
              </div>
            </div>
          </div>
          <div class="right panel">
            <h2>Instances <svg class="info" viewBox="0 0 24 24"><path :d="icons.info" /></svg></h2>
            <div class="igrid"><div v-for="(t, i) in instances" :key="i" class="tile it" :class="t.tone">{{ t.n }}</div></div>
            <div class="ilast"><div v-for="(t, i) in instancesLast" :key="i" class="tile il" :class="t.tone"><span>{{ t.n }}</span></div></div>
          </div>
        </section>

        <section class="line h4">
          <div class="left panels">
            <div class="tile blue fire">
              <svg class="spark" viewBox="0 0 362.700 248.400" preserveAspectRatio="none"><rect v-for="(b, i) in firingBars" :key="i" :x="b[0]" y="160.500" :width="b[1]" height="90" fill="#9aadc8" stroke="#8fb2e0" stroke-width="1" /></svg>
              <span>Firing Alert</span><b>0</b>
            </div>
            <div class="arows">
              <div v-for="a in alertRows" :key="a.n" class="tile arow" :class="[a.tone, { big: a.big }]">
                <svg class="spark" viewBox="0 0 362.700 59.400" preserveAspectRatio="none"><rect v-for="(b, i) in a.bars" :key="i" :x="b[0]" y="29.500" :width="b[1]" height="30" :fill="a.tone === 'orange' ? '#f3d3c0' : '#fbeeb9'" /></svg>
                <span>{{ a.n }}</span><b>{{ a.v }}</b>
              </div>
            </div>
          </div>
          <div class="right panel">
            <h2>Firing Alerts</h2>
            <div class="chartrow">
              <svg class="chart" width="1050" height="208" viewBox="833 1158 1050 208">
                <line v-for="t in alertTicks" :key="t.label" :x1="t.x" :x2="t.x" y1="1167.500" y2="1341" class="gl" />
                <rect v-for="(b, i) in blocks" :key="i" :x="b.x" :y="b.y" :width="b.w" :height="b.h" :fill="b.color" shape-rendering="crispEdges" />
                <path d="M1142.200 1236V1272" stroke="#b9c8b9" stroke-width="1" />
                <text v-for="t in alertTicks" :key="'t' + t.label" :x="t.x" y="1359" text-anchor="middle">{{ t.label }}</text>
              </svg>
              <div class="legend" style="width: 426px">
                <div class="lh"><span>Name</span><span>Last</span></div>
                <div v-for="l in alertLegend" :key="l.name" class="lr"><i :style="{ background: l.color }" /><span>{{ l.name }}</span><em>{{ l.value }}</em></div>
              </div>
            </div>
          </div>
        </section>

        <section class="line h5">
          <div class="left panel">
            <h2>Cluster StdLoad5 <svg class="info" viewBox="0 0 24 24"><path :d="icons.info" /></svg></h2>
            <div class="chartrow">
              <svg class="chart" width="549" height="208" viewBox="84 1417 549 208">
                <rect x="133" y="1435" width="489.500" height="33.200" fill="#fbf6e2" />
                <rect x="133" y="1468.200" width="489.500" height="85" fill="#e8f2e6" />
                <rect x="133" y="1553.200" width="489.500" height="42.500" fill="#e4e6ee" />
                <line v-for="t in loadTicks" :key="t.label" :x1="t.x" :x2="t.x" y1="1435" y2="1599.500" class="gl" />
                <line v-for="y in [1468.2, 1511, 1553.2]" :key="y" x1="133" x2="622.500" :y1="y" :y2="y" class="gl" />
                <polyline v-for="(s, i) in loadSeries" :key="i" :points="s.p" :stroke="s.c" class="ser" />
                <text v-for="t in loadTicks" :key="'t' + t.label" :x="t.x" y="1619" text-anchor="middle">{{ t.label }}</text>
                <text x="126.500" y="1473" text-anchor="end">30%</text><text x="126.500" y="1516" text-anchor="end">20%</text>
                <text x="126.500" y="1558" text-anchor="end">10%</text><text x="126.500" y="1600" text-anchor="end">0%</text>
              </svg>
              <div class="legend" style="width: 178.5px">
                <div class="lh"><span>Name</span><span>Last</span></div>
                <div v-for="l in loadLegend" :key="l.name" class="lr"><i :style="{ background: l.color }" /><span>{{ l.name }}</span><em>{{ l.value }}</em></div>
              </div>
            </div>
          </div>
          <div class="right panel">
            <h2>Instance TPS <svg class="info" viewBox="0 0 24 24"><path :d="icons.info" /></svg></h2>
            <div class="chartrow">
              <svg class="chart" width="1263" height="208" viewBox="833 1417 1263 208">
                <line v-for="t in tpsTicks" :key="t.label" :x1="t.x" :x2="t.x" y1="1435.500" y2="1599" class="gl" />
                <line v-for="y in [1442.3, 1494, 1544.4, 1595.5]" :key="y" x1="878" x2="2086" :y1="y" :y2="y" class="gl" />
                <polygon :points="tpsFill" fill="#5a3a5a" fill-opacity=".07" />
                <polygon :points="tp([...pinkPts, [171.6, 0], [163.7, 0]])" fill="#e88f8f" fill-opacity=".06" />
                <polyline v-for="(s, i) in tpsSeries" :key="i" :points="s.p" :stroke="s.c" class="ser" />
                <text v-for="t in tpsTicks" :key="'t' + t.label" :x="t.x" y="1619" text-anchor="middle">{{ t.label }}</text>
                <text x="871" y="1447" text-anchor="end">600</text><text x="871" y="1498.500" text-anchor="end">400</text>
                <text x="871" y="1549" text-anchor="end">200</text><text x="871" y="1600" text-anchor="end">0</text>
              </svg>
              <div class="legend" style="width: 213px">
                <div class="lh"><span>Name</span><span>Mean <svg width="7" height="5" viewBox="0 0 7 5"><path d="M1 .8l2.500 3L6 .8" /></svg></span></div>
                <div v-for="l in tpsLegend" :key="l.name" class="lr"><i :style="{ background: l.color }" /><span>{{ l.name }}</span><em>{{ l.value }}</em></div>
              </div>
            </div>
          </div>
        </section>

        <div class="rowtitle two"><svg width="8" height="6" viewBox="0 0 8 6"><path d="M.8 1L4 4.500L7.200 1" /></svg>Instances</div>

        <section class="bottom">
          <div class="tables">
            <div class="panel p1">
              <h2>PGSQL Instances <svg class="info" viewBox="0 0 24 24"><path :d="icons.info" /></svg></h2>
              <div class="thead" :style="{ gridTemplateColumns: grid1 }">
                <div v-for="(c, i) in cols1" :key="c.label" :class="{ wide: c.label === 'ClusterID', nudge: i > 1 }">{{ c.label }}<svg v-if="c.icon" class="hi" :class="c.icon" viewBox="0 0 24 24"><path :d="icons[c.icon]" /></svg></div>
              </div>
              <div class="tbody t1">
                <div class="rows">
                  <div v-for="(r, i) in rows1" :key="i" class="tr" :style="{ gridTemplateColumns: grid1 }">
                    <div class="cg">{{ r[1] ? 'Alive' : '' }}</div>
                    <div class="role" :class="r[0] === 'primary' ? 'cb' : 'cg'"><u>{{ r[1] ? r[0] : '' }}</u></div>
                    <div class="lk">{{ r[1] }}</div><div class="lk">{{ r[2] }}</div><div class="lk">{{ r[3] }}</div><div>{{ r[4] }}</div>
                    <div class="gauge"><template v-if="r[1]"><span class="track t-load"><i /></span><em>{{ r[5] }}</em></template></div>
                    <div class="gauge"><template v-if="r[1]"><span class="track t-cpu"><i /></span><em>{{ r[6] }}</em></template></div>
                    <div class="gauge"><template v-if="r[1]"><span class="track t-space"><i /></span><em>20.9%</em></template></div>
                    <div>{{ r[7] }}</div><div>{{ r[8] }}</div>
                    <div class="kern" :class="r[9].toLowerCase()">{{ r[1] ? r[9] : '' }}</div>
                    <div class="cid">{{ r[10] }}</div>
                  </div>
                </div>
              </div>
            </div>
            <div class="panel p2">
              <h2>Patroni Members</h2>
              <div class="thead" :style="{ gridTemplateColumns: grid2 }">
                <div v-for="(c, i) in cols2" :key="c.label" :class="{ nudge: i > 3 }">{{ c.label }}<svg v-if="c.icon" class="hi" :class="c.icon" viewBox="0 0 24 24"><path :d="icons[c.icon]" /></svg></div>
              </div>
              <div class="tbody t2">
                <div v-for="(r, i) in rows2" :key="i" class="tr" :style="{ gridTemplateColumns: grid2 }">
                  <div class="cg">Alive</div>
                  <div :class="r[0] === 'Primary' ? 'cb' : 'cg'">{{ r[0] }}</div>
                  <div class="lk">pg-citus</div><div class="lk">{{ r[1] }}</div><div class="lk">{{ r[2] }}</div><div class="lk">{{ r[3] }}</div>
                  <div class="cg">{{ r[4] }}</div>
                  <div v-for="s in states" :key="s" class="cg">{{ s }}</div>
                  <div class="cy">{{ r[5] }}</div><div class="last">30302</div>
                </div>
              </div>
            </div>
          </div>
          <div class="side">
            <div v-for="(s, i) in side" :key="s[0]" class="tile blue stile">
              <svg class="spark" viewBox="0 0 125.600 153.500" preserveAspectRatio="none"><polygon :points="sideSpark(i)" fill="#8ea9cb" /></svg>
              <span>{{ s[0] }}</span><b>{{ s[1] }}</b>
            </div>
          </div>
        </section>
      </main>
    </div>
  </div>
</template>

<style>
body { background: #000; }
</style>

<style scoped>
* { box-sizing: border-box; }
.desk { width: 2400px; height: 2531px; padding: 43px 63.500px 85px 64px; background: #000; overflow: hidden; font-family: Inter, "Liberation Sans", sans-serif; font-optical-sizing: none; font-size: 16px; color: #1c1d21; letter-spacing: .17px; }
.window { height: 2403px; border-radius: 16px; overflow: hidden; background: #f4f4f4; display: flex; flex-direction: column; }
svg { fill: none; stroke: #303238; flex: none; display: block; }
svg text { stroke: none; fill: #1c1d21; font-size: 13.700px; letter-spacing: .1px; }

.chrome { height: 60px; flex: none; background: #f7f5f3; border-bottom: 1px solid #dedddb; display: flex; align-items: center; padding-left: 22px; }
.chrome svg { stroke: #5c5b5a; stroke-width: 1.400; }
.lights { display: flex; gap: 8.700px; }
.lights i { width: 14px; height: 14px; border-radius: 50%; }
.lights .r { background: #ec6a5e; } .lights .y { background: #f4bf4f; } .lights .g { background: #61c354; }
.cs-side { margin-left: 29.500px; }
.cs-sep { width: 1px; height: 20px; background: #e9e7e5; margin-left: 8px; }
.cs-drop { margin-left: 6.500px; }
.cs-back { margin-left: 29px; }
.chrome .cs-back { stroke: #4a4a4a; stroke-width: 1.800; }
.cs-fwd { margin-left: 30px; }
.chrome .cs-fwd { stroke: #b4b2b0; stroke-width: 1.800; }
.cs-gram { margin-left: 402px; }
.chrome .cs-gram { stroke: none; }
.url { margin-left: 15px; width: 923px; height: 31.500px; border: 1px solid #dcdad8; border-radius: 8px; display: flex; align-items: center; font-size: 14.800px; letter-spacing: 0; color: #262626; }
.url span { width: 52px; text-align: center; margin-left: 433px; }
.u-tr { margin-left: 387px; }
.url .u-tr { stroke: #777; stroke-width: 1.200; }
.u-re { margin-left: 7px; }
.cs-right { display: flex; align-items: center; gap: 23.200px; margin-left: 504.500px; }
.cs-right svg:nth-child(3) { margin: 0 2px 0 1.500px; }

.nav { height: 45px; flex: none; background: #fff; border-bottom: 1px solid #e0e1e2; display: flex; align-items: center; padding-left: 20px; font-weight: 500; }
.nav svg { stroke-width: 1.500; }
.n-menu { margin-right: 20.600px; }
.nav .n-menu { stroke: #1c1d21; stroke-width: 2; }
.crumb { white-space: nowrap; flex: none; }
.c1 { width: 55.500px; } .c2 { width: 102px; } .c3 { width: 64px; } .c4 { width: 151px; color: #54565c; font-weight: 400; }
.sep { margin-right: 12.400px; margin-top: 2px; }
.tools { display: flex; align-items: center; margin-left: 1116px; }
.t-gear { margin-left: 32.500px; }
.add { margin-left: 20.500px; width: 65px; height: 27.500px; border: 1px solid #a9aaad; border-radius: 2px; background: #fff; font: 500 14.200px Inter, sans-serif; display: flex; align-items: center; justify-content: center; gap: 6px; padding: 0; color: #1c1d21; }
.share { margin-left: 10px; width: 56.500px; height: 27.500px; border: 0; border-radius: 2px; background: #456fd6; color: #fff; font: 500 14.200px Inter, sans-serif; padding: 0; }
.vbar { width: 1px; height: 27px; background: #cfd0d2; }
.v1 { margin-left: 9.500px; }
.t-clock { margin-left: 21px; }
.range { margin-left: 10px; width: 96px; white-space: nowrap; font-weight: 400; color: #303238; }
.t-d1 { margin-left: 15px; }
.t-zoom { margin-left: 25px; }
.t-ref { margin-left: 32px; }
.t-d2 { margin-left: 25px; }
.t-mon { margin-left: 30px; }
.v2 { margin-left: 16.500px; }
.t-d3 { margin-left: 22px; }
.nav .t-d3 { stroke-width: 2; }

.body { padding: 18px 18.400px 0 19px; height: 2298px; flex: none; overflow: hidden; display: flex; flex-direction: column; }
.body > * { flex: none; }
.links { display: flex; justify-content: flex-end; gap: 18.900px; height: 36.600px; }
.links a { border: 1px solid #aeafb2; border-radius: 3px; display: flex; align-items: center; justify-content: center; gap: 6px; font-size: 13.800px; font-weight: 500; }
.links svg { stroke-width: 1.500; }
.rowtitle { height: 53.400px; display: flex; align-items: center; gap: 6px; padding: 0 0 3px 10px; font-size: 18.200px; font-weight: 500; }
.rowtitle svg { stroke-width: 1.500; margin-top: 4px; }
.rowtitle.two { padding-bottom: 0; }

.line { display: flex; gap: 11.500px; }
.left { width: 737.500px; flex: none; }
.right { width: 1486px; flex: none; }
.h1 { height: 117.800px; margin-bottom: 11.800px; }
.h2 { height: 118.300px; margin-bottom: 11.200px; }
.h3 { height: 594.500px; margin-bottom: 10.900px; }
.h4 { height: 248.600px; margin-bottom: 10.700px; }
.h5 { height: 248.900px; }
.tight { display: flex; gap: 3.900px; }
.tight > * { flex: 1 1 0; }
.panels { display: flex; gap: 11.700px; }
.panels > * { flex: 1 1 0; min-width: 0; }
.panels > .double, .panels > .fire, .panels > .arows { flex: 0 0 362.700px; }
.panels > .fire { flex-basis: 363px; }
.panels > .double { flex-basis: 362.500px; }

.tile { position: relative; overflow: hidden; border-radius: 2px; color: #f8fbff; font-weight: 500; text-shadow: 0 0 1px rgba(0, 0, 0, .12); }
.blue { background: linear-gradient(120deg, #5b74b1, #557aa4 50%, #517a95); }
.green { background: linear-gradient(120deg, #7da87a, #779f70 50%, #709165); }
.grey { background: linear-gradient(120deg, #8f9eb6, #889cab 50%, #7d98a5); }
.sky { background: linear-gradient(120deg, #8da7dc, #87abd8 50%, #7db1d5); }
.pink { background: linear-gradient(120deg, #c6a8be, #bd9abb 50%, #b38bb9); }
.purple { background: linear-gradient(120deg, #9a92b7, #8c87b1 50%, #7b79a6); }
.orange { background: linear-gradient(120deg, #f0d3a9, #ebb897 50%, #e7a086); color: #24201e; text-shadow: none; }
.yellow { background: linear-gradient(120deg, #fbf5ab, #f6e19a 50%, #f1cc86); color: #1b1a17; text-shadow: none; }
.spark { position: absolute; left: 0; top: 0; width: 100%; height: 100%; stroke: none; z-index: 0; }
.spark polygon { stroke-width: 1px; vector-effect: non-scaling-stroke; }
.tile > span, .tile > b { position: relative; z-index: 1; font-weight: 500; white-space: nowrap; display: block; }
.tile > b { font-weight: 570; }

.hero { display: flex; align-items: center; justify-content: center; font-size: 75px; font-weight: 570; letter-spacing: -.1px; padding-right: 1px; }
.ov { text-align: center; padding-top: 34px; }
.ov .ot { font-size: 18.200px; line-height: 24px; }
.ov .ovv { font-size: 16.500px; line-height: 24px; margin-top: 3.500px; font-weight: 570; }
.ovv small { font-size: 14.200px; }
.health { padding: 28px 0 0 13.800px; }
.health > span { font-size: 11.500px; line-height: 16px; letter-spacing: .1px; }
.health > b { font-size: 40.200px; line-height: 46px; letter-spacing: -.2px; }
.stat { padding: 12.300px 0 0 14px; }
.stat > .st { font-size: 14.200px; line-height: 18px; }
.stat > b { font-size: 20.800px; line-height: 24px; letter-spacing: 0; }
.stat small { font-size: 17px; }
.stat.small > b { font-size: 13.500px; line-height: 14px; }

.panel { background: #fff; border: 1px solid #e5e6e7; border-radius: 2px; }
.panel h2 { margin: 0; height: 36px; padding-left: 8.300px; display: flex; align-items: center; font-size: 16px; font-weight: 500; color: #1c1d21; white-space: nowrap; }
.h4 .panel h2, .h5 .panel h2 { height: 36.900px; }
.info { width: 17px; height: 17px; margin-left: 17.500px; }
.panel h2 .info { stroke-width: 1.800; stroke: #3d3f45; }
.h3 .panel { border-left-color: transparent; border-right-color: transparent; border-bottom: 0; padding: 0; }
.h3 .panel > * { margin-left: -1px; margin-right: -1px; }
.h3 .panel h2 { padding-left: 9.500px; height: 35.800px; }
.cgrid { display: grid; grid-template-columns: repeat(6, 1fr); grid-auto-rows: 136.700px; gap: 3.600px 3.800px; }
.ctile { padding: 13.200px 0 0 14px; }
.ctile > span { font-size: 12px; line-height: 15px; letter-spacing: 0; }
.ctile > b { font-size: 16.700px; line-height: 16px; letter-spacing: 0; }
.bigc { display: grid; grid-template-columns: repeat(3, 1fr); gap: 3.800px; height: 136.700px; margin-top: 3.600px; }
.btile { padding: 13px 0 0 14px; }
.btile > span { font-size: 17.600px; line-height: 22px; letter-spacing: 0; }
.btile > b { font-size: 38.800px; line-height: 43px; letter-spacing: -.2px; }
.btile small { font-size: 25px; }
.igrid { display: grid; grid-template-columns: repeat(20, 1fr); grid-auto-rows: 76.500px; gap: 3.700px; }
.it { display: flex; align-items: center; justify-content: center; font-size: 5.200px; letter-spacing: 0; font-weight: 600; white-space: nowrap; }
.ilast { display: grid; grid-template-columns: repeat(15, 1fr); gap: 3.800px; height: 76.500px; margin-top: 3.700px; }
.il { display: flex; align-items: center; justify-content: center; text-align: center; font-size: 7.700px; letter-spacing: 0; }
.il.purple > span { font-weight: 600; }
.il.orange { font-size: 6.900px; line-height: 8.300px; }
.il.orange > span { white-space: pre; }

.fire { padding: 13px 0 0 14px; }
.fire > span { font-size: 30.500px; line-height: 38px; font-weight: 450; letter-spacing: 0; }
.fire > b { font-size: 100px; line-height: 120px; letter-spacing: 0; }
.arows { display: flex; flex-direction: column; gap: 3.700px; }
.arow { flex: 0 0 59.400px; display: flex; justify-content: space-between; padding: 7px 10px 0; }
.arow > span { font-size: 13.600px; line-height: 20px; font-weight: 400; letter-spacing: .1px; }
.arow > b { font-size: 17.500px; line-height: 25px; }
.arow.big { padding-top: 0; align-items: center; }
.arow.big > b { font-size: 33px; }

.chartrow { display: flex; }
.chart { flex: none; }
.chart rect, .chart polygon { stroke: none; }
.gl { stroke: #24292e; stroke-opacity: .08; stroke-width: 1; }
.ser { stroke-width: 1.200; stroke-linejoin: round; }
.legend { height: 202px; overflow: hidden; font-size: 13.700px; letter-spacing: .1px; }
.lh { height: 34.500px; padding: 8px 10px 0 34px; display: flex; justify-content: space-between; align-items: center; color: #1f4fd0; font-weight: 500; border-bottom: 1px solid #c5c6ca; }
.lh svg { display: inline-block; stroke: #1f4fd0; stroke-width: 1.200; vertical-align: 1px; }
.lr { height: 26.100px; display: flex; align-items: center; border-bottom: 1px solid #cacbcf; padding: 0 10px 0 9px; white-space: nowrap; }
.lr i { width: 16px; height: 4.500px; border-radius: 2px; margin-right: 9px; }
.lr em { margin-left: auto; font-style: normal; }

.bottom { display: flex; gap: 10px; }
.tables { width: 1581px; flex: none; }
.p1 { height: 508.800px; }
.p1 h2 { height: 37px; }
.p2 { height: 300px; margin-top: 10.400px; overflow: hidden; }
.p2 h2 { height: 36.500px; }
.thead { display: grid; margin: 6px 8px 0; height: 34.500px; border-bottom: 1px solid #e4e5e6; font-size: 15.800px; font-weight: 500; padding-top: 2px; }
.p1 .thead { height: 35px; margin-top: 7px; }
.p2 .thead { height: 35.500px; margin-top: 7px; }
.thead > div { display: flex; align-items: center; justify-content: center; white-space: nowrap; }
.thead > .nudge { padding-right: 3px; }
.thead > .wide { padding-left: 40px; }
.hi { width: 17px; height: 17px; margin-left: 7px; }
.thead .hi { stroke-width: 1.800; stroke: #3d3f45; }
.thead .hi.sort { stroke-width: 2.400; width: 16px; height: 16px; margin-left: 7px; }
.tbody { margin: 0 8px; overflow: hidden; }
.t1 { height: 413px; }
.t1 .rows { margin-top: -3.400px; }
.tr { display: grid; height: 40.970px; font-size: 15.800px; }
.tr > div { display: flex; align-items: center; justify-content: center; border-right: 1px solid #e2e3e5; border-bottom: 1px solid #e4e5e7; white-space: nowrap; overflow: hidden; }
.tr > div.cg { background: linear-gradient(120deg, #779c6d, #688a63); color: #f2f7f0; border-right-color: #cfdccc; }
.tr > div.cb { background: linear-gradient(120deg, #5270a8, #4a668f); color: #f2f5fb; border-right-color: #cfd6e3; }
.tr > div.role { border-right: 0; font-weight: 500; }
.tr > div.cg, .tr > div.cb { background-clip: padding-box; border-bottom: 0; box-shadow: inset 0 -1px rgba(40, 60, 40, .08); }
.t1 .tr > div.lk, .t2 .tr > div.lk { color: #1f4fd0; font-weight: 500; padding-right: 13px; }
.t2 .tr > div.cg { border-right: 2px solid #dbe5d8; }
.t2 .tr > div.cb { border-right: 1px solid #dbe0ea; }
.tr > div.cy { background: linear-gradient(120deg, #f9ea9c, #f3da80); border-bottom-color: #efdc90; border-right: 0; }
.tr > div.last { border-right: 0; }
.tr > .gauge { justify-content: flex-start; padding: 0 18.800px 0 7.500px; }
.track { width: 46.500px; height: 25.500px; background: #f4f4f4; border-radius: 2px; }
.track i { display: block; height: 100%; }
.t-load { width: 55px; }
.t-load i { width: 1.200px; background: #4c6396; }
.t-cpu i { width: 2px; background: #34518c; }
.t-space i { width: 9.500px; border-radius: 2px; background: linear-gradient(90deg, #4d708f, #5f8866); }
.gauge em { margin-left: auto; font-style: normal; }
.tr > .kern { border: 0; color: #fbf3e6; }
.polardb { background: linear-gradient(120deg, #e07c3c, #dc5a22); }
.ivorysql { background: linear-gradient(120deg, #e4b75f, #dc9a40); }
.postgresql { background: linear-gradient(120deg, #5270a8, #4a668f); }
.babelfish { background: linear-gradient(120deg, #d26352, #c5473d); }
.tr > .cid { justify-content: flex-start; padding-left: 13px; border-right: 0; }

.side { width: 644px; height: 800px; display: grid; grid-template-columns: repeat(5, 1fr); grid-auto-rows: 153.400px; gap: 3.800px; padding-top: 1px; }
.stile { padding: 12px 0 0 13.300px; }
.stile > span { font-size: 17.400px; line-height: 24px; letter-spacing: 0; }
.stile > b { font-size: 27.500px; line-height: 31.500px; letter-spacing: 0; }
</style>
